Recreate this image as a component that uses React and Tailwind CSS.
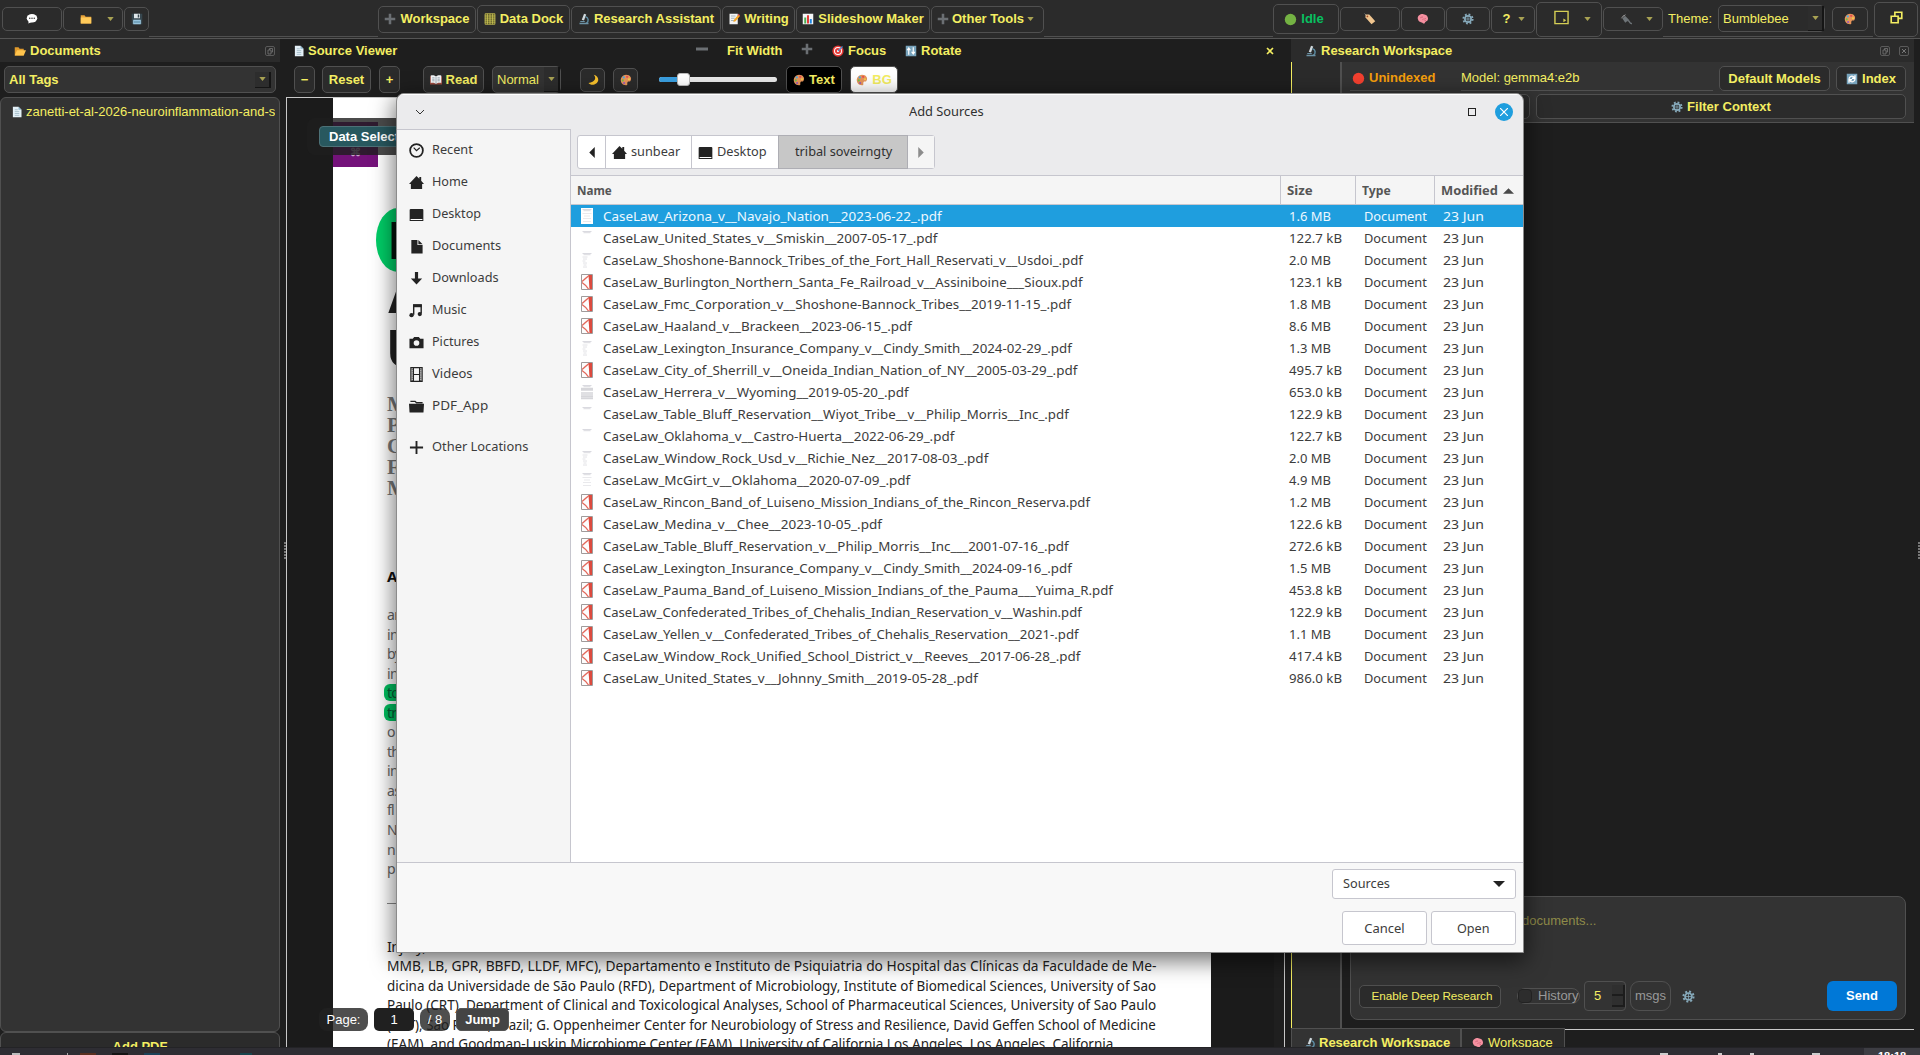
import { useLayoutEffect, useRef, useState } from "react";
import clsx from "clsx";

const files = [
  ["CaseLaw_Arizona_v__Navajo_Nation__2023-06-22_.pdf", "1.6 MB", "page", 339],
  ["CaseLaw_United_States_v__Smiskin__2007-05-17_.pdf", "122.7 kB", "short", 334],
  ["CaseLaw_Shoshone-Bannock_Tribes_of_the_Fort_Hall_Reservati_v__Usdoi_.pdf", "2.0 MB", "list", 480],
  ["CaseLaw_Burlington_Northern_Santa_Fe_Railroad_v__Assiniboine___Sioux.pdf", "123.1 kB", "pdf", 479],
  ["CaseLaw_Fmc_Corporation_v__Shoshone-Bannock_Tribes__2019-11-15_.pdf", "1.8 MB", "pdf", 468],
  ["CaseLaw_Haaland_v__Brackeen__2023-06-15_.pdf", "8.6 MB", "pdf", 309],
  ["CaseLaw_Lexington_Insurance_Company_v__Cindy_Smith__2024-02-29_.pdf", "1.3 MB", "list", 469],
  ["CaseLaw_City_of_Sherrill_v__Oneida_Indian_Nation_of_NY__2005-03-29_.pdf", "495.7 kB", "pdf", 474],
  ["CaseLaw_Herrera_v__Wyoming__2019-05-20_.pdf", "653.0 kB", "full", 306],
  ["CaseLaw_Table_Bluff_Reservation__Wiyot_Tribe__v__Philip_Morris__Inc_.pdf", "122.9 kB", "short", 466],
  ["CaseLaw_Oklahoma_v__Castro-Huerta__2022-06-29_.pdf", "122.7 kB", "short", 351],
  ["CaseLaw_Window_Rock_Usd_v__Richie_Nez__2017-08-03_.pdf", "2.0 MB", "list", 385],
  ["CaseLaw_McGirt_v__Oklahoma__2020-07-09_.pdf", "4.9 MB", "page", 307],
  ["CaseLaw_Rincon_Band_of_Luiseno_Mission_Indians_of_the_Rincon_Reserva.pdf", "1.2 MB", "pdf", 487],
  ["CaseLaw_Medina_v__Chee__2023-10-05_.pdf", "122.6 kB", "pdf", 279],
  ["CaseLaw_Table_Bluff_Reservation_v__Philip_Morris__Inc___2001-07-16_.pdf", "272.6 kB", "pdf", 466],
  ["CaseLaw_Lexington_Insurance_Company_v__Cindy_Smith__2024-09-16_.pdf", "1.5 MB", "pdf", 469],
  ["CaseLaw_Pauma_Band_of_Luiseno_Mission_Indians_of_the_Pauma___Yuima_R.pdf", "453.8 kB", "pdf", 510],
  ["CaseLaw_Confederated_Tribes_of_Chehalis_Indian_Reservation_v__Washin.pdf", "122.9 kB", "pdf", 479],
  ["CaseLaw_Yellen_v__Confederated_Tribes_of_Chehalis_Reservation__2021-.pdf", "1.1 MB", "pdf", 476],
  ["CaseLaw_Window_Rock_Unified_School_District_v__Reeves__2017-06-28_.pdf", "417.4 kB", "pdf", 477],
  ["CaseLaw_United_States_v__Johnny_Smith__2019-05-28_.pdf", "986.0 kB", "pdf", 375],
];

const places = [
  ["Recent", "clock", 41],
  ["Home", "home", 36],
  ["Desktop", "desktop", 49.5],
  ["Documents", "doc", 69],
  ["Downloads", "down", 66.5],
  ["Music", "music", 35],
  ["Pictures", "camera", 47.5],
  ["Videos", "film", 41],
  ["PDF_App", "folder", 56],
];

const abstractLines = ["ar", "in", "by", "in", "to", "tr", "o", "th", "in", "as", "fl", "N", "n", "p"];

const affiliations = [
  ["MMB, LB, GPR, BBFD, LLDF, MFC), Departamento e Instituto de Psiquiatria do Hospital das Clínicas da Faculdade de Me-", 769],
  ["dicina da Universidade de São Paulo (RFD), Department of Microbiology, Institute of Biomedical Sciences, University of Sao", 769],
  ["Paulo (CRT), Department of Clinical and Toxicological Analyses, School of Pharmaceutical Sciences, University of Sao Paulo", 769],
  ["(CRT), São Paulo, Brazil; G. Oppenheimer Center for Neurobiology of Stress and Resilience, David Geffen School of Medicine", 769],
  ["(EAM), and Goodman-Luskin Microbiome Center (EAM), University of California Los Angeles, Los Angeles, California.", 730],
];

// Sets a line of text to a fixed width by squeezing or widening it
function Fit({ w, children, className }) {
  const ref = useRef(null);
  const [scale, setScale] = useState(1);

  useLayoutEffect(() => {
    setScale(w / ref.current.offsetWidth);
  }, [w]);

  return (
    <span
      ref={ref}
      className={clsx("inline-block origin-left whitespace-pre", className)}
      style={{ transform: `scaleX(${scale})` }}
    >
      {children}
    </span>
  );
}

const emojis = {
  speech: (
    <>
      <ellipse cx="8" cy="7" rx="7" ry="5.6" fill="#fff" />
      <path d="M4 10l-1 4 5-2z" fill="#fff" />
      <g fill="#333"><circle cx="5" cy="7" r="1" /><circle cx="8" cy="7" r="1" /><circle cx="11" cy="7" r="1" /></g>
    </>
  ),
  folder: (
    <>
      <path d="M1 3h5l1.5 2H15v9H1z" fill="#e8a33a" />
      <path d="M1 6h14v8H1z" fill="#ffca5a" />
    </>
  ),
  openFolder: (
    <>
      <path d="M1 3h5l1.500 2H13v9H1z" fill="#e09a2c" />
      <path d="M4 7h12l-3 7H1z" fill="#ffc44d" />
    </>
  ),
  floppy: (
    <>
      <path d="M1 1h14v14H2l-1-1z" fill="#37474f" />
      <path d="M4 1h8v6H4z" fill="#dfe6ea" />
      <path d="M9 2h2v4H9z" fill="#37474f" />
      <path d="M3 9h10v6H3z" fill="#a9d5ee" />
      <path d="M4 11h8M4 13h8" stroke="#4d7d97" strokeWidth="1" />
    </>
  ),
  plus: <path d="M8 1v14M1 8h14" stroke="#6b6f73" strokeWidth="3.400" />,
  minus: <path d="M0 8h16" stroke="#6b6f73" strokeWidth="4" />,
  table: (
    <>
      <path d="M1.500 1h13v14h-13z" fill="#4a4820" stroke="#d8d05a" />
      <path d="M4.500 1v14M8 1v14M11.500 1v14M1 4h14M1 6.800h14M1 9.500h14M1 12.200h14" stroke="#d8d05a" strokeWidth="1" />
    </>
  ),
  microscope: (
    <>
      <path d="M8 1l3 1-3 8-3-1z" fill="#cfd8dc" />
      <path d="M10 5c4 1 5 6 1 9" fill="none" stroke="#5c8aa0" strokeWidth="2" />
      <path d="M2 13h12v2H2zM3 10.500h6V12H3z" fill="#6d93a6" />
    </>
  ),
  memo: (
    <>
      <path d="M2 1h11v14H2z" fill="#f2f4f5" />
      <path d="M4 4h6M4 7h5M4 10h4" stroke="#8fa1aa" />
      <path d="M7 12l1-3 6-7 2 2-6 7z" fill="#f5a623" />
      <path d="M13 3l1-2 2 2-1 1z" fill="#e05050" />
    </>
  ),
  chart: (
    <>
      <path d="M1 1h14v14H1z" fill="#f4f6f7" />
      <path d="M3 6h2.600v8H3z" fill="#4caf50" />
      <path d="M6.700 3h2.600v11H6.700z" fill="#e53935" />
      <path d="M10.400 8H13v6h-2.600z" fill="#1e88e5" />
    </>
  ),
  page: (
    <>
      <path d="M2.500 1H10l4 4v10H2.500z" fill="#e4f0f7" />
      <path d="M10 1v4h4z" fill="#8bb6cc" />
      <path d="M5 5h4M5 7.500h6M5 10h6M5 12.500h6" stroke="#9ab4c1" />
    </>
  ),
  book: (
    <>
      <path d="M0 3h16v11H0z" fill="#9c4a3f" />
      <path d="M1 2c3-1 5 0 7 1 2-1 4-2 7-1v10c-3-1-5 0-7 1-2-1-4-2-7-1z" fill="#f4f6f8" />
      <path d="M8 3v10M3 5h3M3 7h3M3 9h3M10 5h3M10 7h3M10 9h3" stroke="#8a9aa5" />
    </>
  ),
  moon: <path d="M9 1c4 4 2 10-7 11 3 4 12 3 13-4 0-3-2-6-6-7z" fill="#f8c12c" />,
  palette: (
    <>
      <path d="M8 1c6 0 8 5 6 8-1 2-3 0-4 2s1 4-2 4C3 15 1 11 1 8s3-7 7-7z" fill="#e8955a" />
      <circle cx="5" cy="4.500" r="1.500" fill="#4aa8e0" />
      <circle cx="9.500" cy="3.700" r="1.500" fill="#e84f4f" />
      <circle cx="12" cy="7" r="1.400" fill="#f7d046" />
      <circle cx="3.700" cy="8.500" r="1.400" fill="#6cc04a" />
      <circle cx="5.500" cy="12" r="1.400" fill="#9b59b6" />
    </>
  ),
  target: (
    <>
      <circle cx="8" cy="8" r="7.500" fill="#e53935" />
      <circle cx="8" cy="8" r="5.300" fill="#fff" />
      <circle cx="8" cy="8" r="4" fill="#e53935" />
      <circle cx="8" cy="8" r="1.500" fill="#fff" />
      <path d="M8 8l6-6" stroke="#4a90d9" strokeWidth="1.500" />
    </>
  ),
  rotate: (
    <>
      <path d="M1 1h14v14H1z" fill="#78a4bd" />
      <path d="M5 13V5M2.800 7L5 4l2.200 3M11 3v8M8.800 9l2.200 3 2.200-3" fill="none" stroke="#fff" strokeWidth="1.600" />
    </>
  ),
  refresh: (
    <>
      <path d="M1 1h14v14H1z" fill="#78a4bd" />
      <path d="M4 8c0-4 5-5 7-2M12 3v4H8M12 8c0 4-5 5-7 2M4 13V9h4" fill="none" stroke="#fff" strokeWidth="1.700" />
    </>
  ),
  green: <circle cx="8" cy="8" r="7" fill="#74b243" />,
  red: <circle cx="8" cy="8" r="7" fill="#f4402f" />,
  tag: (
    <>
      <path d="M2 2l5 0 8 9-5 4-8-9z" fill="#f0c58f" />
      <circle cx="4.500" cy="4.500" r="1.200" fill="#a04a2a" />
      <path d="M2 2l-1-1" stroke="#ddd" />
    </>
  ),
  brain: (
    <>
      <path d="M1.500 9c-2-4 2-8 7-7.500 5 0 7.500 5 5.500 8.500-1 1-3 1-4 4H8c0-2-5.500-1-6.500-5z" fill="#f590a0" />
      <path d="M4 7c1-2 3 0 4-2M7 9c2-2 3 0 5-2M6 4l1 1M10 10l2 0" stroke="#cf6478" fill="none" />
    </>
  ),
  gear: (
    <>
      <circle cx="8" cy="8" r="6.200" fill="none" stroke="#86a9ba" strokeWidth="2.500" strokeDasharray="2.430 2.430" />
      <circle cx="8" cy="8" r="4.200" fill="none" stroke="#86a9ba" strokeWidth="2.200" />
      <path d="M8 4v8M4 8h8" stroke="#86a9ba" />
    </>
  ),
  plug: (
    <>
      <path d="M5 5l2-3M2 7l3-4" stroke="#999" strokeWidth="1.300" />
      <path d="M3 7l4-3 5 5-5 4z" fill="#6e7478" />
      <path d="M10 10c4 0 2 5 6 4" stroke="#6e7478" strokeWidth="2" fill="none" />
    </>
  ),
  windows: (
    <>
      <path d="M6 1.500h8.500V9H6z" fill="none" stroke="#f4ee62" strokeWidth="2" />
      <path d="M1.500 6.500H10V14.500H1.500z" fill="#2b2b2b" stroke="#f4ee62" strokeWidth="2" />
    </>
  ),
  screen: (
    <>
      <path d="M1 1.500h14v13H1z" fill="none" stroke="#d5ce55" strokeWidth="1.500" />
      <path d="M10 9v4l3-2z" fill="#d5ce55" />
    </>
  ),
};

function Emoji({ name, className = "size-3" }) {
  return (
    <svg viewBox="0 0 16 16" className={clsx("shrink-0", className)}>
      {emojis[name]}
    </svg>
  );
}

const glyphs = {
  clock: (
    <>
      <circle cx="8" cy="8" r="6.800" fill="none" stroke="#232323" strokeWidth="1.900" />
      <path d="M5 5l3 3.200L11.500 5" fill="none" stroke="#232323" strokeWidth="1.300" />
    </>
  ),
  home: <path d="M8 1l3 3V2h2v4l3 3.500h-2V15H2V9.500H0z" fill="#232323" />,
  desktop: (
    <>
      <path d="M1.500 2h13l.8.8V15H.7V2.800z" fill="#232323" />
      <path d="M1.700 12.800h12.600v1.100H1.700z" fill="#fff" />
    </>
  ),
  doc: <path d="M2.500 1H9v5.500h5.500V15.500h-12zM10 1l4.500 4.500H10z" fill="#232323" />,
  down: <path d="M6.300 1h3.400v7H14l-6 6.500L2 8h4.300z" fill="#232323" />,
  music: (
    <>
      <path d="M5 12.500V2H13v9" fill="none" stroke="#232323" strokeWidth="1.500" />
      <path d="M4.500 1.500h9v3h-9z" fill="#232323" />
      <circle cx="2.700" cy="13" r="2.300" fill="#232323" />
      <circle cx="11.500" cy="11.800" r="2.300" fill="#232323" />
    </>
  ),
  camera: (
    <>
      <path d="M.5 4H4l1.500-2h5L12 4h3.500v10H.5z" fill="#232323" />
      <circle cx="8" cy="8.500" r="3" fill="#f5f5f5" />
    </>
  ),
  film: (
    <>
      <path d="M2 .7h12v14.600H2zM4.700 1v14M11.300 1v14M4.700 8h6.600" fill="none" stroke="#232323" strokeWidth="1.300" />
      <path d="M3.400 2v13M12.600 2v13" stroke="#232323" strokeDasharray="1 1" />
    </>
  ),
  folder: (
    <>
      <path d="M1.500 2.500h5L8 4h6.500" stroke="#232323" strokeWidth="1.500" fill="none" />
      <path d="M0 5h16l-.6 9.500H.6z" fill="#232323" />
    </>
  ),
  add: <path d="M8 1v14M1 8h14" stroke="#232323" strokeWidth="2" />,
};

function Glyph({ name, className = "size-4" }) {
  return (
    <svg viewBox="0 0 16 16" className={clsx("shrink-0", className)}>
      {glyphs[name]}
    </svg>
  );
}

function Caret() {
  return (
    <svg viewBox="0 0 8 5" className="w-[7px] h-1 shrink-0">
      <path d="M0 0h8L4 5z" fill="#a8a253" />
    </svg>
  );
}

function Btn({ className, children }) {
  return (
    <button
      className={clsx(
        "flex shrink-0 items-center justify-center rounded-[5px] border border-[#505050] font-bold whitespace-nowrap",
        className
      )}
    >
      {children}
    </button>
  );
}

function DropArrow({ className }) {
  return (
    <span className={clsx("flex items-center justify-center border-r-2 border-b border-[#151515] bg-[#2d2d2d]", className)}>
      <Caret />
    </span>
  );
}

function TopBar() {
  return (
    <header className="flex h-[39px] shrink-0 items-center border-b border-[#555] bg-[#2b2b2b] pl-0.5 text-[13px]">
      <Btn className="h-6 w-[60px]"><Emoji name="speech" /></Btn>
      <Btn className="ml-px h-6 w-[60px] gap-[15px] pl-2"><Emoji name="folder" /><Caret /></Btn>
      <Btn className="ml-px h-6 w-[25px]"><Emoji name="floppy" /></Btn>
      <div className="h-[37px] w-[229px] shrink-0 self-start border-b border-[#505050]" />
      <Btn className="h-[27px] w-[98px] gap-1"><Emoji name="plus" />Workspace</Btn>
      <Btn className="ml-px h-7 w-[93px] gap-1"><Emoji name="table" />Data Dock</Btn>
      <Btn className="ml-px h-[27px] w-[150px] gap-1"><Emoji name="microscope" />Research Assistant</Btn>
      <Btn className="ml-px h-[27px] w-[73px] gap-1"><Emoji name="memo" />Writing</Btn>
      <Btn className="ml-px h-[27px] w-[134px] gap-1"><Emoji name="chart" />Slideshow Maker</Btn>
      <Btn className="ml-px h-[27px] w-[113px] gap-[3px] pr-1"><Emoji name="plus" />Other Tools<Caret /></Btn>
      <div className="h-[37px] w-[229px] shrink-0 self-start border-b border-[#505050]" />
      <Btn className="h-[30px] w-[66px] gap-1 pr-1 text-[#08c060]"><Emoji name="green" className="size-[13px]" />Idle</Btn>
      <Btn className="ml-px h-6 w-[60px]"><Emoji name="tag" /></Btn>
      <Btn className="ml-px h-6 w-11"><Emoji name="brain" /></Btn>
      <Btn className="ml-px h-6 w-11"><Emoji name="gear" /></Btn>
      <Btn className="ml-px h-[27px] w-11 gap-2 pl-0.5">?<Caret /></Btn>
      <Btn className="ml-px h-[35px] w-[66px] gap-[15px] pl-1.5"><Emoji name="screen" className="mb-1 size-[15px]" /><Caret /></Btn>
      <Btn className="ml-px h-6 w-[60px] gap-[14px] pl-1.5"><Emoji name="plug" /><Caret /></Btn>
      <div className="flex h-[37px] w-[210px] shrink-0 items-center self-start border-b border-[#505050] pt-px">
        <span className="ml-[5px] w-[50px]">Theme:</span>
        <div className="flex h-[27px] w-[107px] items-stretch justify-between rounded-[5px] border border-[#505050] pl-1">
          <span className="self-center">Bumblebee</span>
          <DropArrow className="w-4" />
        </div>
        <Btn className="ml-[7px] h-6 w-9"><Emoji name="palette" /></Btn>
      </div>
      <Btn className="ml-px h-[35px] w-11"><Emoji name="windows" className="mb-1 size-[13px]" /></Btn>
    </header>
  );
}

function FloatIcon({ close }) {
  return (
    <svg viewBox="0 0 10 10" className="size-2.5">
      <rect x=".5" y=".5" width="9" height="9" rx="1.500" fill="none" stroke="#5a5a5a" />
      {close ? (
        <path d="M3 3l4 4M7 3L3 7" stroke="#777" />
      ) : (
        <path d="M3 4h3v4H3zM4.500 4V2.500h3V6H6" fill="none" stroke="#777" strokeWidth=".8" />
      )}
    </svg>
  );
}

function Documents() {
  return (
    <section className="flex w-[280px] shrink-0 flex-col">
      <div className="flex h-[23px] shrink-0 items-center gap-1 bg-[#2b2b2b] pr-[5px] pl-3.5 font-bold">
        <Emoji name="openFolder" />
        <span className="grow">Documents</span>
        <FloatIcon />
      </div>
      <div className="mx-1 mt-1 flex h-[27px] shrink-0 items-center justify-between rounded-[5px] border border-[#505050] bg-[#333] pr-1 pl-1 font-bold">
        All Tags
        <DropArrow className="h-4 w-4" />
      </div>
      <div className="mt-1 h-[935px] shrink-0 overflow-hidden rounded-md border border-[#505050] bg-[#333] pt-1 pr-1 pl-2.5">
        <div className="flex items-center gap-[3px] overflow-hidden whitespace-nowrap">
          <Emoji name="page" />
          zanetti-et-al-2026-neuroinflammation-and-s
        </div>
      </div>
      <button className="h-7 shrink-0 rounded-md border border-[#505050] bg-[#2b2b2b] pt-0.5 text-center font-bold">Add PDF</button>
    </section>
  );
}

function Splitter({ className }) {
  return (
    <div className={clsx("flex shrink-0 items-center justify-end", className)}>
      <div className="flex flex-col gap-px">
        {[0, 1, 2, 3, 4, 5].map((i) => (
          <span key={i} className="size-[2px] bg-[#777]" />
        ))}
      </div>
    </div>
  );
}

function ViewerHeader() {
  return (
    <div className="flex h-[23px] shrink-0 items-center pl-[7px] font-bold">
      <Emoji name="page" />
      <span className="ml-[3px] w-[388px]">Source Viewer</span>
      <Emoji name="minus" className="mb-1 size-3" />
      <span className="ml-[19px] w-[74px]">Fit Width</span>
      <Emoji name="plus" className="mb-1 size-3" />
      <Emoji name="target" className="ml-[19px] size-3" />
      <span className="ml-1 w-[57px]">Focus</span>
      <Emoji name="rotate" />
      <span className="ml-1">Rotate</span>
      <svg viewBox="0 0 8 8" className="mr-[11px] ml-auto size-2">
        <path d="M1 1l6 6M7 1L1 7" stroke="#f4ee62" strokeWidth="1.600" />
      </svg>
    </div>
  );
}

function ViewerTools() {
  return (
    <div className="flex h-[35px] shrink-0 items-center pl-2">
      <Btn className="h-[27px] w-[21px] bg-[#2b2b2b]">−</Btn>
      <Btn className="ml-[7px] h-[27px] w-[49px] bg-[#2b2b2b]">Reset</Btn>
      <Btn className="ml-2 h-[27px] w-[21px] bg-[#2b2b2b]">+</Btn>
      <Btn className="ml-[23px] h-[27px] w-[61px] gap-1 bg-[#2b2b2b]"><Emoji name="book" />Read</Btn>
      <div className="ml-2 flex h-[27px] w-[69px] items-stretch justify-between rounded-[5px] border border-[#505050] bg-[#333] pl-1">
        <span className="self-center">Normal</span>
        <DropArrow className="w-4" />
      </div>
      <Btn className="ml-[19px] h-6 w-[25px] bg-[#2b2b2b]"><Emoji name="moon" /></Btn>
      <Btn className="ml-2 h-6 w-[25px] bg-[#2b2b2b]"><Emoji name="palette" /></Btn>
      <div className="relative ml-[21px] flex h-[5px] w-[118px] shrink-0 items-center rounded-sm bg-[#e8e8e8]">
        <div className="h-full w-6 rounded-l-sm bg-[#3a9fe0]" />
        <div className="absolute left-[18px] h-[13px] w-[13px] rounded-[3px] border border-[#bbb] bg-white" />
      </div>
      <Btn className="ml-[9px] h-[27px] w-[56px] gap-1 bg-black"><Emoji name="palette" />Text</Btn>
      <Btn className="ml-2 h-[27px] w-[48px] gap-1 bg-white"><Emoji name="palette" />BG</Btn>
    </div>
  );
}

function PdfPage() {
  return (
    <div className="ml-[46px] h-[1000px] w-[878px] shrink-0 bg-white pt-6 font-['Liberation_Sans'] text-[#222]">
      <div className="flex h-[45px] w-[45px] items-center justify-center bg-[#74127a] pt-4 text-[11px] font-bold text-[#c9a6cb]">⌘</div>
      <div className="mt-[41px] ml-[43px] h-16 w-24 rounded-[22px/32px] bg-[#00cc66] pl-3 text-[53px] leading-[66px] font-bold text-[#04140b]">E</div>
      <div className="mt-[-4px] ml-[54px] text-[53px] leading-[54px] font-bold">
        <div>A</div>
        <div>U</div>
      </div>
      <div className="mt-[18px] ml-[54px] font-['Liberation_Serif'] text-[21px] leading-[21px] font-bold text-[#777]">
        {["M", "P", "C", "F", "M"].map((c, i) => (
          <div key={i}>{c}</div>
        ))}
      </div>
      <div className="mt-[67px] ml-[54px] font-['Noto_Sans'] text-[15px] leading-5 font-bold text-[#111]">A</div>
      <div className="mt-[19px] ml-[54px] font-['Noto_Sans'] text-[14px] tracking-[-0.7px] text-[#666]">
        {abstractLines.map((line, i) => (
          <div key={i} className="h-[19.550px] leading-[19px]">
            <span className={clsx((i === 4 || i === 5) && "-ml-[3px] inline-block h-[17px] w-12 rounded-l-md bg-[#00c060] pl-[3px] leading-[17px] text-[#0a5a34]")}>{line}</span>
          </div>
        ))}
      </div>
      <div className="mt-6 ml-[54px] w-60 border-t border-[#888]" />
      <div className="mt-[33px] ml-[54px] font-['Noto_Sans'] text-[14.500px] leading-[19.500px]">
        <div className="tracking-[-0.7px]">Injury,</div>
        {affiliations.map(([text, w]) => (
          <div key={text} className="h-[19.500px]"><Fit w={w}>{text}</Fit></div>
        ))}
      </div>
    </div>
  );
}

function Viewer() {
  return (
    <section className="flex w-[999px] shrink-0 flex-col">
      <ViewerHeader />
      <ViewerTools />
      <div className="relative flex grow overflow-hidden border-x border-t border-[#c8c8c8] bg-[#1b1b1b]">
        <PdfPage />
        <div className="ml-auto w-[10px] bg-[#1f1f1f]" />
        <div className="absolute top-5 left-5 h-[37px] w-60 rounded-lg bg-[#1e1e1e]/80 pt-2 pl-3">
          <div className="flex h-[21px] w-40 items-center rounded-[4px] border border-[#4d7177] bg-[#28585f] pl-[9px] font-bold text-white">Data Selector</div>
        </div>
        <div className="absolute bottom-4 left-8 flex h-[23px] items-stretch text-white">
          <span className="flex w-[49px] items-center justify-center rounded-lg bg-[#222]/80">Page:</span>
          <span className="ml-1.5 flex w-10 items-center justify-center rounded-[5px] bg-[#202020] text-[13px]">1</span>
          <span className="ml-1.5 flex w-[30px] items-center justify-center rounded-lg bg-[#222]/80">/ 8</span>
          <button className="ml-1.5 w-[53px] rounded-[5px] border border-[#555] bg-[#444] font-bold">Jump</button>
        </div>
      </div>
    </section>
  );
}

function Workspace() {
  return (
    <section className="flex w-[623px] shrink-0 flex-col">
      <div className="flex h-[23px] shrink-0 items-center bg-[#2b2b2b] pr-[5px] pl-[14px] font-bold">
        <Emoji name="microscope" />
        <span className="ml-1 grow">Research Workspace</span>
        <FloatIcon />
        <span className="w-[9px]" />
        <FloatIcon close />
      </div>
      <div className="flex h-[966px] shrink-0">
        <div className="w-[51px] shrink-0 border-r-2 border-l border-r-[#505050] border-l-[#f4ee62] bg-[#2b2b2b]" />
        <div className="flex grow flex-col">
          <div className="h-[61px] shrink-0 border-b border-[#505050] bg-[#333] pt-1 pr-2 pl-2">
            <div className="flex h-[25px] items-stretch">
              <span className="flex w-[90px] items-center gap-1 border-b border-[#505050] pl-[2px] font-bold text-[#f59e0b]"><Emoji name="red" className="size-[13px]" />Unindexed</span>
              <span className="ml-[21px] flex w-[252px] items-center border-b border-[#505050]">Model: gemma4:e2b</span>
              <Btn className="ml-1.5 w-[111px] bg-[#2b2b2b]">Default Models</Btn>
              <Btn className="ml-1.5 w-[70px] gap-1 bg-[#2b2b2b]"><Emoji name="refresh" />Index</Btn>
            </div>
            <div className="mt-[3px] flex h-[25px] gap-1.5">
              <Btn className="w-[180px] bg-[#2b2b2b]" />
              <Btn className="grow gap-1 bg-[#2b2b2b]"><Emoji name="gear" />Filter Context</Btn>
            </div>
          </div>
          <div className="mt-auto mr-2 mb-2 ml-2 flex h-[124px] flex-col justify-between rounded-lg border border-[#505050] bg-[#333] p-2 pb-2">
            <div className="mt-1.5 pl-[163px] text-[#8f8b49]">documents...</div>
            <div className="flex h-[30px] items-center">
              <Btn className="h-[23px] w-[142px] bg-[#2b2b2b] pl-1"><span className="text-[11.700px] font-normal">Enable Deep Research</span></Btn>
              <div className="ml-4 flex h-4 w-[63px] items-center rounded-lg border border-[#505050] text-[#999]">
                <span className="mr-[6px] h-3.5 w-3.5 rounded-sm border border-[#222] bg-[#2d2d2d]" />
                History
              </div>
              <div className="ml-1 flex h-[30px] w-[42px] items-stretch justify-between rounded-[4px] border border-[#505050] pl-[9px]">
                <span className="self-center">5</span>
                <span className="my-[3px] flex w-[13px] flex-col">
                  <span className="grow border-r-2 border-b-2 border-[#1c1c1c] bg-[#2f2f2f]" />
                  <span className="grow border-r-2 border-b-2 border-[#1c1c1c] bg-[#2f2f2f]" />
                </span>
              </div>
              <span className="ml-1 flex h-[30px] w-[41px] items-center justify-center rounded-[9px] border border-[#505050] text-[#999]">msgs</span>
              <Emoji name="gear" className="ml-[11px] size-[13px]" />
              <button className="ml-auto h-[30px] w-[70px] rounded-md bg-[#0078d7] font-bold text-white">Send</button>
            </div>
          </div>
        </div>
      </div>
      <div className="flex h-[30px] shrink-0 items-stretch">
        <div className="flex w-[170px] items-center gap-[3px] border border-[#505050] bg-[#333] pl-3 font-bold"><Emoji name="microscope" />Research Workspace</div>
        <div className="flex w-[104px] items-center gap-1 border border-[#505050] bg-[#2b2b2b] pl-2.5"><Emoji name="brain" />Workspace</div>
        <div className="mt-px grow border-t border-[#c8c8c8]" />
      </div>
    </section>
  );
}

function FileIcon({ kind }) {
  if (kind === "pdf") {
    return (
      <svg viewBox="0 0 12 16" className="h-4 w-3 shrink-0">
        <path d="M.5.5h11v15H.5z" fill="#fdfdfd" />
        <path d="M7.500 1H11v14.500H8.500z" fill="#dc4a3e" />
        <path d="M1 7.500C4 5 6 3 8 1.500M1 8.500c3 2 5 4 6.500 6.500" stroke="#e2695c" strokeWidth="1.400" fill="none" />
        <path d="M.5.5h11v15H.5z" fill="none" stroke="#a09a9a" />
      </svg>
    );
  }
  return (
    <svg viewBox="0 0 12 16" className="h-4 w-3 shrink-0">
      <path d="M0 0h12v16H0z" fill="#fff" />
      <path d="M1.500 1.500h9M2.500 2.700h7" stroke="#d6d6dc" strokeWidth=".9" />
      {kind === "page" && <path d="M1.500 5.500h9M3 8h6M2 10.500h8M2 13.500h8" stroke="#e6e6ea" strokeWidth=".9" />}
      {kind === "list" && <path d="M1.500 5h5M2 7h4M1.500 9h3M2 11h4M2.500 13h3M2 15h4" stroke="#e2e2e6" strokeWidth="1" />}
      {kind === "full" && <path d="M0 4.500h12M0 6h12M0 9h12M0 11h12M0 12.800h12M0 14.500h12" stroke="#d6d6da" strokeWidth="1.400" />}
    </svg>
  );
}

function FileDialog() {
  return (
    <div className="absolute top-[93px] left-[396px] flex h-[860px] w-[1128px] flex-col overflow-hidden rounded-t-lg border border-[#8b8b8b] bg-[#ebebed] font-['Noto_Sans'] text-[13px] text-[#3c3c3c] shadow-[0_6px_22px_2px_rgba(0,0,0,0.55)]">
      <div className="flex h-[35px] shrink-0 items-center border-t border-white">
        <svg viewBox="0 0 10 6" className="ml-[18px] h-[6px] w-[10px]">
          <path d="M1 1l4 4 4-4" fill="none" stroke="#333" />
        </svg>
        <div className="w-[484px]" />
        <Fit w={75} className="text-[#303030]">Add Sources</Fit>
        <div className="mr-[11px] ml-auto h-2 w-2 border border-[#222]" />
        <div className="mr-2.5 ml-2 flex size-[18px] items-center justify-center rounded-full bg-[#1f9ede]">
          <svg viewBox="0 0 8 8" className="size-2"><path d="M0 0l8 8M8 0L0 8" stroke="#fff" strokeWidth="1.200" /></svg>
        </div>
      </div>
      <div className="flex h-[733px] shrink-0">
        <nav className="w-[174px] shrink-0 border-t border-r border-[#c6c6ce] bg-[#f5f5f5] pt-1">
          {places.map(([label, icon, w]) => (
            <div key={label} className="flex h-8 items-center gap-2 pl-3">
              <Glyph name={icon} className="size-[15px]" />
              <Fit w={w}>{label}</Fit>
            </div>
          ))}
          <div className="mt-[9px] flex h-8 items-center gap-2 pl-3">
            <Glyph name="add" className="size-[15px]" />
            <Fit w={96}>Other Locations</Fit>
          </div>
        </nav>
        <div className="flex grow flex-col">
          <div className="flex h-[47px] shrink-0 items-start border-b border-[#c6c6ce] pt-1.5 pl-1.5">
            <div className="flex h-[34px] rounded-[3px] border border-[#c6c6ce] bg-white">
              <div className="flex w-7 items-center justify-center border-r border-[#c6c6ce]">
                <svg viewBox="0 0 6 12" className="h-[11px] w-1.5"><path d="M6 0v12L0 6z" fill="#222" /></svg>
              </div>
              <div className="flex w-[86px] items-center gap-1 border-r border-[#c6c6ce] pl-1.5">
                <Glyph name="home" className="size-[15px]" />
                <Fit w={49}>sunbear</Fit>
              </div>
              <div className="flex w-[86px] items-center gap-1 pl-1.5">
                <Glyph name="desktop" className="size-[15px]" />
                <Fit w={50}>Desktop</Fit>
              </div>
              <div className="-my-px flex w-[130px] items-center border border-[#aeaeb4] bg-[#c7c7c7] pl-4">
                <Fit w={97} className="text-[#303030]">tribal soveirngty</Fit>
              </div>
              <div className="flex w-[26px] items-center justify-center bg-[#f5f5f5]">
                <svg viewBox="0 0 6 12" className="h-[11px] w-1.5"><path d="M0 0v12l6-6z" fill="#8c8c8c" /></svg>
              </div>
            </div>
          </div>
          <div className="flex h-[29px] shrink-0 items-stretch border-b border-[#c6c6ce] bg-[#f5f5f5] pt-px font-bold text-[#555]">
            <div className="-mt-px flex w-[710px] items-center border-r border-[#c6c6ce] pt-px pl-1.5"><Fit w={35}>Name</Fit></div>
            <div className="-mt-px flex w-[75px] items-center border-r border-[#c6c6ce] pt-px pl-1.5"><Fit w={25.5}>Size</Fit></div>
            <div className="-mt-px flex w-[79px] items-center border-r border-[#c6c6ce] pt-px pl-1.5"><Fit w={29}>Type</Fit></div>
            <div className="flex grow items-center pl-1.5">
              <div className="w-[62px]"><Fit w={56.5}>Modified</Fit></div>
              <svg viewBox="0 0 12 6" className="h-1.5 w-[11px]"><path d="M0 6h12L6 0z" fill="#4a4a4a" /></svg>
            </div>
          </div>
          <div className="grow bg-white">
            {files.map(([name, size, kind, w], i) => (
              <div key={name} className={clsx("flex h-[22px] items-center pl-2.5", i === 0 && "bg-[#1f9ede] text-[#eef8fe]")}>
                <FileIcon kind={kind} />
                <div className="ml-2.5 flex pt-0.5">
                  <div className="w-[686px] shrink-0"><Fit w={w}>{name}</Fit></div>
                  <div className="w-[75px] shrink-0"><Fit w={size.length > 6 ? 53 : 42}>{size}</Fit></div>
                  <div className="w-[79px] shrink-0"><Fit w={63}>Document</Fit></div>
                  <Fit w={41}>23 Jun</Fit>
                </div>
              </div>
            ))}
          </div>
        </div>
      </div>
      <div className="flex grow flex-col items-end border-t border-[#c6c6ce] bg-[#f8f8f8] pt-1.5 pr-[7px]">
        <div className="flex h-[30px] w-[184px] items-center justify-between rounded-[3px] border border-[#c6c6ce] bg-white pr-2.5 pl-2.5">
          <Fit w={47}>Sources</Fit>
          <svg viewBox="0 0 12 6" className="h-1.5 w-3"><path d="M0 0h12L6 6z" fill="#222" /></svg>
        </div>
        <div className="mt-3 flex gap-1">
          <button className="h-[34px] w-[85px] rounded-[3px] border border-[#c6c6ce] bg-white pt-px"><Fit w={40}>Cancel</Fit></button>
          <button className="h-[34px] w-[85px] rounded-[3px] border border-[#c6c6ce] bg-white pt-px"><Fit w={33}>Open</Fit></button>
        </div>
      </div>
    </div>
  );
}

function Taskbar() {
  return (
    <footer className="flex h-2 items-end overflow-hidden border-t border-[#232326] bg-[#2e2d33] pl-3">
      <span className="h-0.5 w-2 bg-[#bbb]" />
      <span className="ml-[47px] h-0.5 w-px bg-[#aaa]" />
      <span className="ml-3 h-0.5 w-4 bg-[#5a3020]" />
      <span className="ml-4 h-0.5 w-4 bg-[#151515]" />
      <span className="ml-4 h-0.5 w-4 bg-[#1c4258]" />
      <span className="ml-20 h-0.5 w-3 bg-[#18454d]" />
      <span className="ml-auto h-0.5 w-2 bg-[#ccc]" />
      <span className="ml-[50px] h-0.5 w-1 bg-[#ccc]" />
      <span className="ml-7 h-0.5 w-1 bg-[#ccc]" />
      <span className="ml-[58px] h-0.5 w-2 bg-[#ccc]" />
      <span className="ml-11 h-[7px] w-14 overflow-hidden bg-[#3d3d43] pl-3.5 pt-[3px] text-[11px] leading-[11px] font-bold text-white">18:18</span>
    </footer>
  );
}

export default function App() {
  return (
    <div className="relative flex h-[1055px] w-[1920px] flex-col overflow-hidden bg-[#1e1e1e] font-['Liberation_Sans'] text-[#f4ee62]">
      <TopBar />
      <main className="flex h-[1008px] shrink-0 overflow-hidden text-[13px]">
        <Documents />
        <Splitter className="w-1.5 pt-[14px]" />
        <Viewer />
        <div className="w-1.5 shrink-0" />
        <Workspace />
        <Splitter className="w-1.5 pt-[14px]" />
      </main>
      <Taskbar />
      <FileDialog />
    </div>
  );
}
